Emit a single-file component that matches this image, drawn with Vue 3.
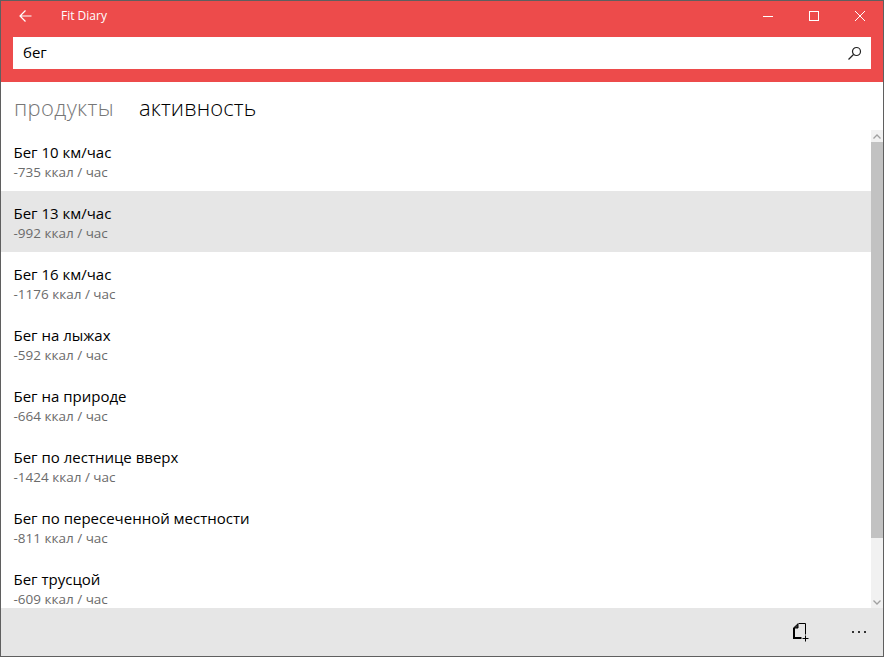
<script setup>
const rows = [
  ['Бег 10 км/час', '-735 ккал / час'],
  ['Бег 13 км/час', '-992 ккал / час', true],
  ['Бег 16 км/час', '-1176 ккал / час'],
  ['Бег на лыжах', '-592 ккал / час'],
  ['Бег на природе', '-664 ккал / час'],
  ['Бег по лестнице вверх', '-1424 ккал / час'],
  ['Бег по пересеченной местности', '-811 ккал / час'],
  ['Бег трусцой', '-609 ккал / час'],
]
</script>

<template>
  <div class="win">
    <header class="head">
      <div class="title">
        <svg class="back" width="16" height="14" viewBox="0 0 16 14" fill="none" stroke="#fff" stroke-width="1.2"><path d="M14.500 7H3M8.500 1.500 3 7l5.500 5.500"/></svg>
        <span class="name">Fit Diary</span>
        <div class="caps">
          <svg width="46" height="16" viewBox="0 0 46 16" fill="none" stroke="#fff"><path d="M18 8.500h10"/></svg>
          <svg width="46" height="16" viewBox="0 0 46 16" fill="none" stroke="#fff"><rect x="18.500" y="3.500" width="9" height="9"/></svg>
          <svg width="46" height="16" viewBox="0 0 46 16" fill="none" stroke="#fff"><path d="M18 3l10 10M28 3 18 13"/></svg>
        </div>
      </div>
      <div class="search">
        <span>бег</span>
        <svg width="16" height="16" viewBox="0 0 16 16" fill="none" stroke="#222" stroke-width="1.200"><circle cx="9.500" cy="6.500" r="4"/><path d="M6.500 9.500 1.500 14.500"/></svg>
      </div>
    </header>
    <nav class="tabs">
      <span class="off">продукты</span>
      <span class="on">активность</span>
    </nav>
    <div class="body">
      <ul class="list">
        <li v-for="r in rows" :key="r[0]" class="row" :class="{ sel: r[2] }">
          <div class="t">{{ r[0] }}</div>
          <div class="s">{{ r[1] }}</div>
        </li>
      </ul>
      <div class="bar">
        <div class="arrow"><svg width="8" height="5" viewBox="0 0 8 5" fill="none" stroke="#a0a0a0" stroke-width="1.300"><path d="M.5 4.500 4 1l3.500 3.500"/></svg></div>
        <div class="track"><div class="thumb"></div></div>
        <div class="arrow"><svg width="8" height="5" viewBox="0 0 8 5" fill="none" stroke="#a0a0a0" stroke-width="1.300"><path d="M.5.500 4 4 7.500.500"/></svg></div>
      </div>
    </div>
    <footer class="foot">
      <svg class="add" width="18" height="20" viewBox="0 0 18 20" fill="none" stroke="#000">
        <path d="M7.500 .5H14.500V11.500"/>
        <path d="M3 5V15H10.500" stroke-width="2"/>
        <path d="M2.500 5 7 .8V5Z" fill="#333" stroke-width="1"/>
        <path d="M14.500 12.500v6M11.500 15.500h6"/>
      </svg>
      <div class="dots"><i></i><i></i><i></i></div>
    </footer>
  </div>
</template>

<style scoped>
.win {
  width: 884px;
  height: 657px;
  box-sizing: border-box;
  border: 1px solid #5f5f5f;
  display: flex;
  flex-direction: column;
  font-family: "Open Sans", "Noto Sans", sans-serif;
  background: #fff;
  overflow: hidden;
}
.head {
  background: #ed4b4b;
  height: 81px;
  flex: none;
}
.title {
  height: 36px;
  box-sizing: border-box;
  padding-bottom: 7px;
  display: flex;
  align-items: center;
  color: #fff;
  font-size: 12px;
}
.back { margin-left: 16px; }
.name { margin-left: 28px; flex: 1; }
.caps { display: flex; }
.search {
  margin: 0 12px;
  height: 32px;
  background: #fff;
  display: flex;
  align-items: center;
  justify-content: space-between;
  padding: 0 8px 0 10px;
  font-size: 15px;
  color: #000;
}
.search span { margin-top: -2px; }
.tabs {
  height: 48px;
  flex: none;
  box-sizing: border-box;
  padding: 2px 0 0 13px;
  display: flex;
  align-items: center;
  gap: 25px;
  font-size: 22px;
  font-weight: 300;
}
.off { color: #777; letter-spacing: .35px; }
.on { color: #000; letter-spacing: .1px; }
.body {
  flex: 1;
  min-height: 0;
  display: flex;
}
.list {
  flex: 1;
  margin: 0;
  padding: 0;
  list-style: none;
  overflow: hidden;
}
.row {
  height: 61px;
  box-sizing: border-box;
  padding: 12px 12.500px 0;
}
.sel { background: #e6e6e6; }
.t { font-size: 15px; line-height: 20px; color: #000; }
.s { font-size: 13.500px; line-height: 21px; color: #6b6b6b; }
.bar {
  width: 12px;
  flex: none;
  display: flex;
  flex-direction: column;
  background: #f1f1f1;
}
.arrow {
  height: 12px;
  flex: none;
  display: flex;
  align-items: center;
  justify-content: center;
}
.track { flex: 1; padding-bottom: 58px; }
.thumb { height: 100%; background: #c2c2c2; }
.foot {
  height: 48px;
  flex: none;
  background: #e6e6e6;
  display: flex;
  align-items: center;
  justify-content: flex-end;
  padding-right: 17px;
}
.add { margin-right: 43px; margin-top: 2px; }
.dots { display: flex; gap: 4px; }
.dots i { width: 2px; height: 2px; background: #333; display: block; }
</style>
